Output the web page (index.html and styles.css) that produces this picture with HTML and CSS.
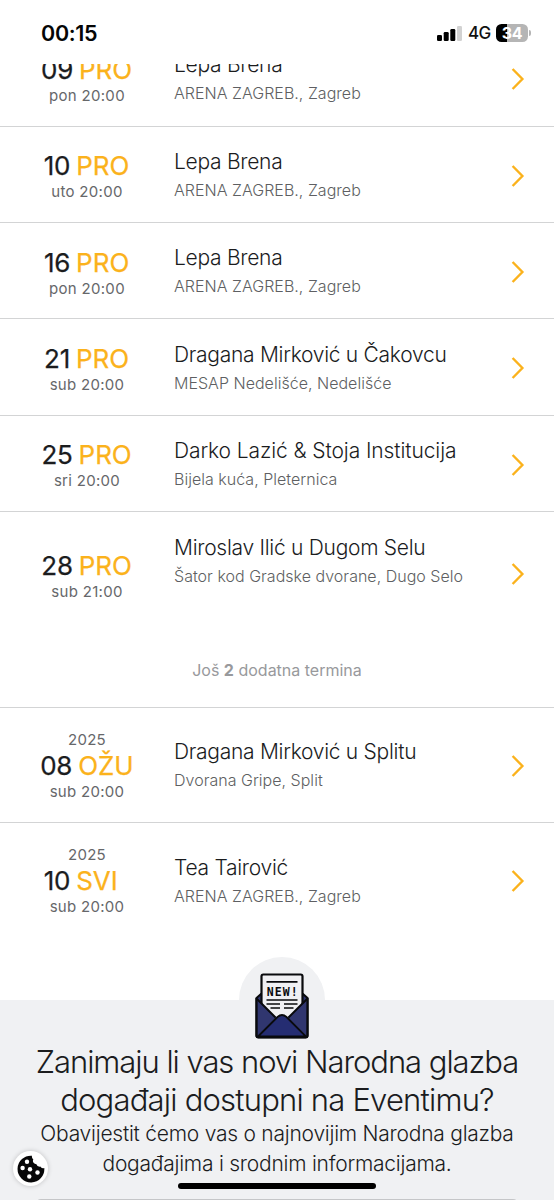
FILE: index.html
```html
<!DOCTYPE html>
<html lang="hr">
<head>
<meta charset="utf-8">
<title>Narodna glazba</title>
<link rel="stylesheet" href="styles.css">
</head>
<body>
<svg class="defs" width="0" height="0"><symbol id="chev" viewBox="0 0 14 24"><path d="M1.6 2 11.4 12 1.6 22" fill="none" stroke="#fbb21c" stroke-width="2.4"/></symbol></svg>
<div class="screen">
  <header class="status">
    <span class="clock">00:15</span>
    <div class="indicators">
      <svg class="signal" width="25" height="17" viewBox="0 0 25 17"><rect x="0" y="10" width="5" height="6" rx="1.3"/><rect x="6.7" y="7" width="5" height="9" rx="1.3"/><rect x="13.3" y="4" width="5" height="12" rx="1.3"/><rect x="20" y="1" width="5" height="15" rx="1.3" fill="#d2d2d2"/></svg>
      <span class="net">4G</span>
      <div class="battery"><span class="level">34</span></div>
      <span class="cap"></span>
    </div>
  </header>
  <main class="viewport">
    <ul class="list">
      <li class="row"><div class="date"><p class="day">09 <b>PRO</b></p><p class="time">pon 20:00</p></div><div class="info"><h2>Lepa Brena</h2><p>ARENA ZAGREB., Zagreb</p></div><svg class="chev"><use href="#chev"/></svg></li>
      <li class="row"><div class="date"><p class="day">10 <b>PRO</b></p><p class="time">uto 20:00</p></div><div class="info"><h2>Lepa Brena</h2><p>ARENA ZAGREB., Zagreb</p></div><svg class="chev"><use href="#chev"/></svg></li>
      <li class="row"><div class="date"><p class="day">16 <b>PRO</b></p><p class="time">pon 20:00</p></div><div class="info"><h2>Lepa Brena</h2><p>ARENA ZAGREB., Zagreb</p></div><svg class="chev"><use href="#chev"/></svg></li>
      <li class="row"><div class="date"><p class="day">21 <b>PRO</b></p><p class="time">sub 20:00</p></div><div class="info"><h2>Dragana Mirković u Čakovcu</h2><p>MESAP Nedelišće, Nedelišće</p></div><svg class="chev"><use href="#chev"/></svg></li>
      <li class="row"><div class="date"><p class="day">25 <b>PRO</b></p><p class="time">sri 20:00</p></div><div class="info"><h2 class="loose">Darko Lazić &amp; Stoja Institucija</h2><p>Bijela kuća, Pleternica</p></div><svg class="chev"><use href="#chev"/></svg></li>
      <li class="row grouped"><div class="date"><p class="day">28 <b>PRO</b></p><p class="time">sub 21:00</p></div><div class="info"><h2>Miroslav Ilić u Dugom Selu</h2><p>Šator kod Gradske dvorane, Dugo Selo</p></div><svg class="chev"><use href="#chev"/></svg><p class="more">Još <strong>2</strong> dodatna termina</p></li>
      <li class="row tall"><div class="date"><p class="year">2025</p><p class="day">08 <b>OŽU</b></p><p class="time">sub 20:00</p></div><div class="info"><h2>Dragana Mirković u Splitu</h2><p>Dvorana Gripe, Split</p></div><svg class="chev"><use href="#chev"/></svg></li>
      <li class="row tall last"><div class="date"><p class="year">2025</p><p class="day">10 <b>SVI</b></p><p class="time">sub 20:00</p></div><div class="info"><h2>Tea Tairović</h2><p>ARENA ZAGREB., Zagreb</p></div><svg class="chev"><use href="#chev"/></svg></li>
    </ul>
    <section class="signup">
      <div class="bubble">
        <svg width="54" height="66" viewBox="0 0 54 66">
          <path d="M1.5 25 6 21H48L52.5 25V62.5Q52.5 64.3 50.7 64.3H3.3Q1.5 64.3 1.5 62.5Z" fill="#30366f" stroke="#090a0d" stroke-width="2"/>
          <path d="M6.5 34V3.3Q6.5 1.5 8.3 1.5H45.7Q47.5 1.5 47.5 3.3V34L30.5 46H23.5Z" fill="#f0f0f3" stroke="none"/>
          <path d="M6.5 31V3.3Q6.5 1.5 8.3 1.5H45.7Q47.5 1.5 47.5 3.3V31" fill="none" stroke="#090a0d" stroke-width="2.2"/>
          <path d="M2 26 20.5 44V50L2.5 63ZM52 26 33.5 44V50L51.5 63Z" fill="#30366f"/>
          <path d="M2 26 20.5 44.5M52 26 33.5 44.5" fill="none" stroke="#090a0d" stroke-width="2"/>
          <path d="M3 63.5 22.5 44Q27 40 31.5 44L51 63.5Z" fill="#252d72" stroke="#090a0d" stroke-width="1.8"/>
          <path d="M1.5 25V62.5Q1.5 64.3 3.3 64.3H50.7Q52.5 64.3 52.5 62.5V25" fill="none" stroke="#090a0d" stroke-width="2.2"/>
          <path d="M11.5 8.8H42.5M11.5 27H42.5M11.5 31H25M29 31H42.5M15.5 35H25M29 35H38.5" stroke="#090a0d" stroke-width="1.7"/>
          <text x="27.3" y="22.8" text-anchor="middle" textLength="31" lengthAdjust="spacing" class="new">NEW!</text>
        </svg>
      </div>
      <h1><span class="h-a">Zanimaju li vas novi Narodna glazba</span><br><span class="h-b">događaji dostupni na Eventimu?</span></h1>
      <p class="lead">Obavijestit ćemo vas o najnovijim Narodna glazba<br>događajima i srodnim informacijama.</p>
      <div class="field"></div>
    </section>
  </main>
  <button class="cookie" aria-label="Cookies"><svg width="28" height="28" viewBox="0 0 28 28"><path d="M15 .7A13.4 13.4 0 1 0 27.3 13Q24.7 14 23.3 11.6 20.2 12 19.4 9.3 14.7 8 16.3 4.3 14.5 3 15 .7Z" fill="#070708"/><g fill="#fff"><circle cx="10" cy="6.7" r="2.2"/><circle cx="5.6" cy="13" r="2.2"/><circle cx="13" cy="14.3" r="2.2"/><circle cx="20.5" cy="17.5" r="2.2"/><circle cx="12.3" cy="21.5" r="2.2"/></g></svg></button>
  <div class="home"></div>
</div>
</body>
</html>
```
FILE: styles.css
```css
* { box-sizing: border-box; margin: 0; padding: 0; }
body { background: #fff; font-family: Inter, "Liberation Sans", sans-serif; color: #1b1c1e; }
.defs { position: absolute; }
.screen { position: relative; width: 554px; height: 1200px; overflow: hidden; display: flex; flex-direction: column; }
.status { flex: none; height: 64px; padding: 2px 23px 0 41px; display: flex; align-items: center; justify-content: space-between; }
.clock { font-size: 21.5px; font-weight: 600; letter-spacing: -0.3px; color: #050505; }
.indicators { display: flex; align-items: center; }
.signal { margin-right: 6px; }
.net { font-size: 17px; font-weight: 500; letter-spacing: -0.6px; width: 28px; color: #111; }
.battery { width: 32px; height: 18px; border-radius: 5.5px; background: linear-gradient(to right, #000 11px, #b5b5b5 11px); text-align: center; line-height: 18px; }
.level { color: #fff; font-size: 16px; font-weight: 700; letter-spacing: -0.2px; }
.cap { width: 2px; height: 6px; margin-left: 1px; border-radius: 0 2px 2px 0; background: #b5b5b5; }
.viewport { flex: 1; overflow: hidden; }
.list { list-style: none; margin-top: -33.9px; }
.row { height: 96.45px; border-bottom: 1.5px solid #d3d4d5; display: grid; grid-template-columns: 174px 332px 48px; align-items: start; }
.date { display: flex; flex-direction: column; align-items: center; width: 174px; padding-top: 23.6px; }
.day { display: flex; gap: 6px; font-size: 26px; font-weight: 400; line-height: 32px; letter-spacing: -0.3px; white-space: nowrap; -webkit-text-stroke: 0.25px; }
.day b { font-weight: 400; color: #fbb21c; min-width: 54px; letter-spacing: 0; }
.time, .year { font-size: 15px; line-height: 20px; letter-spacing: 0.3px; color: #66676a; }
.info { padding-top: 20.3px; white-space: nowrap; }
.info h2 { font-size: 21px; font-weight: 300; line-height: 30px; letter-spacing: -0.28px; }
.info h2.loose { letter-spacing: -0.1px; }
.info p { font-size: 16px; font-weight: 300; line-height: 20px; padding-top: 3px; letter-spacing: 0.02px; color: #5e5f62; }
.chev { width: 14px; height: 24px; margin: 37px 0 0 5px; }
.grouped { height: 195.6px; grid-template-rows: 146px 20px; }
.grouped .date { padding-top: 37.4px; }
.grouped .chev { margin-top: 50px; }
.more { grid-column: 1 / -1; text-align: center; font-size: 16px; line-height: 24px; color: #98999c; }
.more strong { font-weight: 700; }
.tall { height: 115.3px; }
.tall .date { padding-top: 22px; }
.tall .info { padding-top: 29.5px; }
.tall .chev { margin-top: 46px; }
.last { height: 177px; border-bottom: 0; }
.signup { height: 260px; background: #f0f1f3; display: flex; flex-direction: column; align-items: center; white-space: nowrap; text-align: center; }
.bubble { width: 86px; height: 86px; margin: -43px 0 0 10px; border-radius: 50%; background: #f0f1f3; padding-top: 15.4px; }
.new { font: 700 11.5px "DejaVu Sans Mono", monospace; fill: #090a0d; }
.signup h1 { font-size: 31px; font-weight: 300; line-height: 37.5px; }
.h-a { letter-spacing: -1.05px; }
.h-b { letter-spacing: -0.8px; }
.lead { font-size: 21px; font-weight: 300; line-height: 29.5px; letter-spacing: -0.24px; margin-top: 1px; }
.field { width: 484px; height: 40px; margin-top: 20.5px; border: 2px solid #c5c6c8; border-radius: 6px; background: #fff; }
.cookie { position: absolute; left: 13px; top: 1151px; width: 35px; height: 35px; border: 0; border-radius: 50%; background: #fff; box-shadow: 0 0 5px #0003; display: flex; align-items: center; justify-content: center; }
.home { position: absolute; left: 178px; top: 1183px; width: 198px; height: 6px; border-radius: 3px; background: #000; }
```
